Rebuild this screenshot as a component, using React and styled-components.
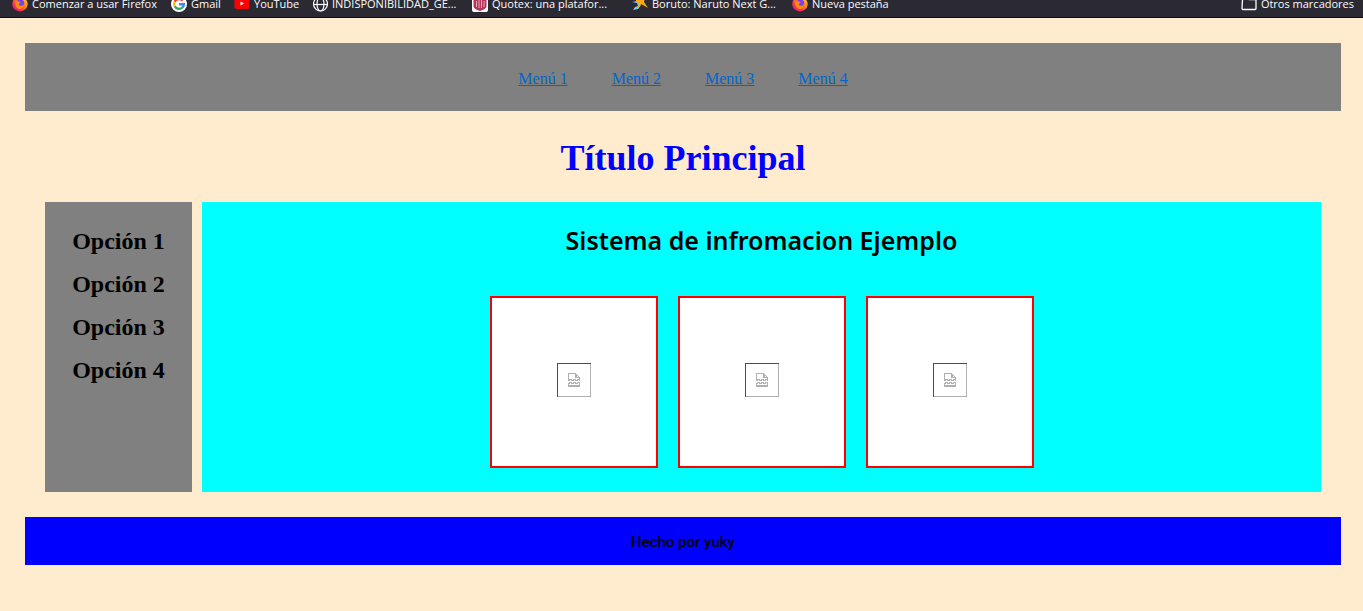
import React from 'react';
import styled, { createGlobalStyle } from 'styled-components';

const GlobalStyle = createGlobalStyle`
  * { box-sizing: border-box; }
  body {
    margin: 0;
    min-height: 100vh;
    background: #ffebcd;
    font-family: "Liberation Serif", "Times New Roman", serif;
    font-size: 16px;
    color: #000;
  }
`;

const BookmarkBar = styled.nav`
  display: flex;
  align-items: flex-end;
  gap: 12px;
  height: 18px;
  padding: 0 9px 5px 12px;
  overflow: hidden;
  background: #2b2a33;
  border-bottom: 1px solid #0c0c0d;
`;

const Bookmark = styled.a`
  display: flex;
  flex: none;
  align-items: center;
  gap: 4px;
  height: 16px;
  width: ${(p) => p.$width || 'auto'};
  margin-left: ${(p) => (p.$last ? 'auto' : '0')};
  color: #fbfbfe;
  font: 11px/16px "Open Sans", "Segoe UI", sans-serif;
  white-space: nowrap;
  text-decoration: none;
`;

const BookmarkIcon = styled.svg`
  flex: none;
  width: 16px;
  height: 16px;
`;

const Page = styled.div`
  padding: 25px 22px 46px 25px;
`;

const Header = styled.header`
  padding: 27px 20px 23px;
  background: #808080;
`;

const Menu = styled.nav`
  display: flex;
  justify-content: center;
  gap: 44px;
  line-height: 18px;
`;

const MenuLink = styled.a`
  color: #0066cc;
`;

const Title = styled.h1`
  margin: 27px 0 24px;
  color: #00f;
  font-size: 36px;
  line-height: 40px;
  text-align: center;
`;

const Columns = styled.div`
  display: flex;
  gap: 10px;
  padding: 0 20px;
`;

const Sidebar = styled.aside`
  flex: none;
  width: 147px;
  min-height: 290px;
  padding: 25px 20px;
  background: #808080;
`;

const Options = styled.ul`
  display: grid;
  gap: 15px;
  margin: 0;
  padding: 0;
  list-style: none;
  font-size: 24px;
  font-weight: bold;
  line-height: 28px;
  text-align: center;
`;

const Main = styled.main`
  flex: 1;
  padding: 23px 20px 24px;
  background: #0ff;
`;

const Subtitle = styled.h2`
  margin: 0 0 41px;
  font-family: "Noto Sans", "Lucida Sans", sans-serif;
  font-size: 25px;
  font-weight: 600;
  line-height: 30px;
  text-align: center;
`;

const Gallery = styled.div`
  display: flex;
  flex-wrap: wrap;
  justify-content: center;
  gap: 20px;
`;

const Card = styled.figure`
  margin: 0;
  padding: 65px 65px 69px;
  background: #fff;
  border: 2px solid #f00;
`;

const MissingImage = styled.svg`
  display: block;
  width: 34px;
  height: 34px;
`;

const Footer = styled.footer`
  margin-top: 25px;
  padding: 16px 20px 14px;
  background: #00f;
  font: 500 15px/18px Roboto, "Liberation Sans", Arial, sans-serif;
  text-align: center;
`;

const Firefox = () => (
  <BookmarkIcon viewBox="0 0 16 16" aria-hidden="true">
    <defs>
      <linearGradient id="flame" x1="1" y1="0" x2="0.2" y2="1">
        <stop offset="0" stopColor="#ffe226" />
        <stop offset="0.45" stopColor="#ff8a16" />
        <stop offset="0.75" stopColor="#ff3750" />
        <stop offset="1" stopColor="#e31587" />
      </linearGradient>
    </defs>
    <path d="M2 3.500 3 1l1.500 2L8 1.500 10 0c1 1.500 2 2 3 3 1.500 1 3 3 2.600 6A7.700 7.200 0 0 1 .3 9C.2 6.500.8 4.500 2 3.500z" fill="url(#flame)" />
    <circle cx="8.300" cy="7.500" r="4" fill="#7b3ff2" />
    <path d="M3 6c2-2 4 0 5.500 0 0 1-2 1.500-1.500 3 1 1.500 4 1 5-1 0 3-2 5-4.500 5S3 10 3 6z" fill="#ff8a16" />
  </BookmarkIcon>
);

const Google = () => (
  <BookmarkIcon viewBox="0 0 16 16" aria-hidden="true">
    <circle cx="8" cy="8" r="8" fill="#fff" />
    <g fill="none" strokeWidth="2.400">
      <path d="M11.600 4.700A4.900 4.900 0 0 0 3.700 5.700" stroke="#ea4335" />
      <path d="M3.700 5.700a4.900 4.900 0 0 0 0 4.600" stroke="#fbbc05" />
      <path d="M3.700 10.300a4.900 4.900 0 0 0 7.500 1.400" stroke="#34a853" />
      <path d="M11.200 11.700A4.900 4.900 0 0 0 12.900 8.200H8" stroke="#4285f4" />
    </g>
  </BookmarkIcon>
);

const YouTube = () => (
  <BookmarkIcon viewBox="0 0 16 16" aria-hidden="true">
    <rect x="0.500" y="2" width="15" height="11" rx="2.500" fill="#f00" />
    <path d="M6.500 5.500v4l3.500-2z" fill="#fff" />
  </BookmarkIcon>
);

const Globe = () => (
  <BookmarkIcon viewBox="0 0 16 16" fill="none" stroke="#fbfbfe" strokeWidth="1.200" aria-hidden="true">
    <circle cx="8.500" cy="8" r="7" />
    <ellipse cx="8.500" cy="8" rx="3.500" ry="7" />
    <path d="M1.500 8.500h14" />
  </BookmarkIcon>
);

const Quotex = () => (
  <BookmarkIcon viewBox="0 0 16 16" aria-hidden="true">
    <rect width="16" height="16" rx="2" fill="#fff" />
    <path d="M1.500 1h13v10c-1 2-4 3-6.500 4-2.500-1-5.500-2-6.500-4z" fill="#b8345a" />
    <path d="M4.500 5v6M7 4v8M9.500 4v8M12 5v6" stroke="#efc5d0" strokeWidth="0.800" />
  </BookmarkIcon>
);

const Boruto = () => (
  <BookmarkIcon viewBox="0 0 16 16" aria-hidden="true">
    <path d="M0 6l5 1 1 3-3 1-2 3 5-1 3-4-4-4z" fill="#6fd0f5" />
    <path d="M3 1l5 3 5-3-1 5 4 6-5-3-2-1-3 5-1-1 2-4-3-3z" fill="#ffa813" />
  </BookmarkIcon>
);

const Folder = () => (
  <BookmarkIcon viewBox="0 0 16 16" fill="none" stroke="#fbfbfe" strokeWidth="1.300" aria-hidden="true">
    <path d="M1.500 3.500q0-1 1-1h4l1.500 1h6q1 0 1 1v8q0 1-1 1h-12q-1 0-1-1z" />
  </BookmarkIcon>
);

const bookmarks = [
  { label: 'Comenzar a usar Firefox', Icon: Firefox, width: '147px' },
  { label: 'Gmail', Icon: Google, width: '51px' },
  { label: 'YouTube', Icon: YouTube, width: '66px' },
  { label: 'INDISPONIBILIDAD_GE...', Icon: Globe, width: '148px' },
  { label: 'Quotex: una platafor...', Icon: Quotex, width: '148px' },
  { label: 'Boruto: Naruto Next G...', Icon: Boruto, width: '148px' },
  { label: 'Nueva pestaña', Icon: Firefox },
];

const BrokenImage = () => (
  <MissingImage viewBox="0 0 34 34" fill="none" role="img" aria-label="Imagen no disponible" shapeRendering="crispEdges">
    <path d="M33.500 0v33.500H0" stroke="#b0b0b0" />
    <path d="M.5 34V.5H34" stroke="#4c4c4c" />
    <g stroke="#b0b0b0">
      <path d="M11.500 18v-7.500h7l4 4V18M18.500 10.500v4h4M19.500 11v3" />
      <path d="M11 17.500h2M12 16.500h3M14 17.500h3M16 16.500h3M18 17.500h3M20 16.500h3" />
      <path d="M11 20.500h2M12 19.500h3M14 20.500h3M16 19.500h3M18 20.500h3M20 19.500h3" />
      <path d="M11.500 20v3.500h11V20M11 22.500h12" />
    </g>
  </MissingImage>
);

export default function App() {
  return (
    <>
      <GlobalStyle />
      <BookmarkBar aria-label="Marcadores">
        {bookmarks.map(({ label, Icon, width }) => (
          <Bookmark key={label} href="#" $width={width}>
            <Icon />
            {label}
          </Bookmark>
        ))}
        <Bookmark href="#" $last>
          <Folder />
          Otros marcadores
        </Bookmark>
      </BookmarkBar>
      <Page>
        <Header>
          <Menu>
            {[1, 2, 3, 4].map((n) => (
              <MenuLink key={n} href="#">{`Menú ${n}`}</MenuLink>
            ))}
          </Menu>
        </Header>
        <Title>Título Principal</Title>
        <Columns>
          <Sidebar>
            <Options>
              {[1, 2, 3, 4].map((n) => (
                <li key={n}>{`Opción ${n}`}</li>
              ))}
            </Options>
          </Sidebar>
          <Main>
            <Subtitle>Sistema de infromacion Ejemplo</Subtitle>
            <Gallery>
              {[1, 2, 3].map((n) => (
                <Card key={n}>
                  <BrokenImage />
                </Card>
              ))}
            </Gallery>
          </Main>
        </Columns>
        <Footer>Hecho por yuky</Footer>
      </Page>
    </>
  );
}
